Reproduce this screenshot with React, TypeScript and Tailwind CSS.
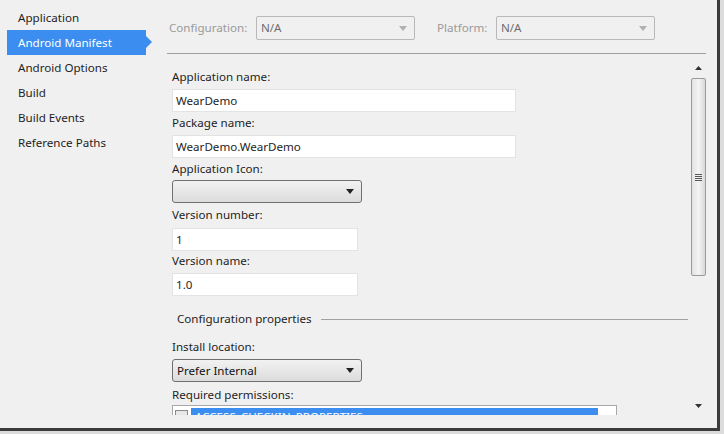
import React from "react";

const font = { fontFamily: '"Noto Sans", "Open Sans", Arial, sans-serif' };

function Caret({ color = "#222" }: { color?: string }) {
  return (
    <svg width="8" height="5" viewBox="0 0 8 5">
      <path d="M0 0 L8 0 L4 5 Z" fill={color} />
    </svg>
  );
}

function TextBox({ value, w }: { value: string; w: string }) {
  return (
    <div className={`${w} h-[23px] bg-white border border-[#e3e3e3] flex items-center px-[3px] text-[11.6px] text-[#1e1e1e]`}>
      {value}
    </div>
  );
}

function Combo({ value }: { value: string }) {
  return (
    <div className="w-[190px] h-[23px] rounded-[3px] border border-[#707070] bg-gradient-to-b from-[#f2f2f2] to-[#dcdcdc] flex items-center justify-between pl-[4px] pr-[7px] text-[11.6px] text-[#111]">
      <span>{value}</span>
      <Caret />
    </div>
  );
}

function Label({ children, mt }: { children: React.ReactNode; mt: string }) {
  return <div className={`${mt} text-[11.6px] text-[#1e1e1e] leading-[16px] h-[16px]`}>{children}</div>;
}

export default function App() {
  const nav = ["Application", "Android Manifest", "Android Options", "Build", "Build Events", "Reference Paths"];
  return (
    <div className="w-[724px] h-[434px] bg-[#dcdcdc] overflow-hidden" style={font}>
      <div className="w-[720px] h-[431px] border-r-[3px] border-b-[3px] border-[#3c3c3c] bg-[#f0f0f0] flex">
        {/* Sidebar */}
        <div className="w-[160px] shrink-0 pt-[5px] pl-[7px]">
          {nav.map((n, i) =>
            i === 1 ? (
              <div key={n} className="relative w-[139px] h-[25px] bg-[#3b8ef0] text-white text-[11.6px] flex items-center pl-[11px]">
                {n}
                <div className="absolute right-[-6px] top-[6px] w-0 h-0 border-t-[6px] border-b-[6px] border-l-[6px] border-t-transparent border-b-transparent border-l-[#3b8ef0]" />
              </div>
            ) : (
              <div key={n} className="h-[25px] text-[11.6px] text-[#1e1e1e] flex items-center pl-[11px]">
                {n}
              </div>
            )
          )}
        </div>
        {/* Main */}
        <div className="flex-1 flex flex-col min-w-0">
          <div className="h-[55px] shrink-0 flex flex-col pr-[11px]">
            <div className="flex items-center pt-[16px] pl-[9px] h-[40px]">
              <span className="text-[11.6px] text-[#9a9a9a] w-[87px]">Configuration:</span>
              <div className="w-[159px] h-[24px] border border-[#b9b9b9] rounded-[2px] flex items-center justify-between pl-[4px] pr-[7px] text-[11.6px] text-[#6d6d6d]">
                <span>N/A</span>
                <Caret color="#b0b0b0" />
              </div>
              <span className="text-[11.6px] text-[#9a9a9a] ml-[22px] w-[59px]">Platform:</span>
              <div className="w-[159px] h-[24px] border border-[#b9b9b9] rounded-[2px] flex items-center justify-between pl-[4px] pr-[7px] text-[11.6px] text-[#6d6d6d]">
                <span>N/A</span>
                <Caret color="#b0b0b0" />
              </div>
            </div>
            <div className="mt-[13px] ml-[7px] h-px bg-[#a0a0a0]" />
          </div>
          <div className="flex-1 flex min-h-0 mb-[13px]">
            <div className="flex-1 overflow-hidden pl-[12px] pt-[14px] min-w-0">
              <Label mt="mt-0">Application name:</Label>
              <div className="mt-[4px]"><TextBox value="WearDemo" w="w-[344px]" /></div>
              <Label mt="mt-[3px]">Package name:</Label>
              <div className="mt-[4px]"><TextBox value="WearDemo.WearDemo" w="w-[344px]" /></div>
              <Label mt="mt-[3px]">Application Icon:</Label>
              <div className="mt-[3px]"><Combo value="" /></div>
              <Label mt="mt-[4px]">Version number:</Label>
              <div className="mt-[5px]"><TextBox value="1" w="w-[186px]" /></div>
              <Label mt="mt-[2px]">Version name:</Label>
              <div className="mt-[4px]"><TextBox value="1.0" w="w-[186px]" /></div>
              <div className="mt-[15px] flex items-center pl-[5px] h-[16px]">
                <span className="text-[11.6px] text-[#1e1e1e] leading-[16px]">Configuration properties</span>
                <div className="flex-1 h-px bg-[#a0a0a0] ml-[9px] mr-[2px]" />
              </div>
              <Label mt="mt-[12px]">Install location:</Label>
              <div className="mt-[4px]"><Combo value="Prefer Internal" /></div>
              <Label mt="mt-[5px]">Required permissions:</Label>
              <div className="mt-[2px] w-[445px] h-[40px] bg-white border border-[#a8a8a8] pt-[2px] pl-[2px]">
                <div className="flex items-start">
                  <div className="w-[13px] h-[13px] border border-[#8a8a8a] bg-[#e8e8e8] mt-[2px]" />
                  <div className="ml-[3px] w-[407px] h-[18px] bg-[#3b8ef0] text-white text-[11.6px] leading-[18px] pl-[4px]">
                    ACCESS_CHECKIN_PROPERTIES
                  </div>
                </div>
              </div>
            </div>
            {/* Scrollbar */}
            <div className="w-[17px] shrink-0 mr-[10px] flex flex-col items-center pt-[11px] pb-[7px]">
              <svg width="7" height="4" viewBox="0 0 7 4"><path d="M0 4 L7 4 L3.5 0 Z" fill="#333" /></svg>
              <div className="mt-[8px] w-[15px] h-[198px] rounded-[2px] border border-[#9a9a9a] bg-gradient-to-r from-[#e2e2e2] via-[#f4f4f4] to-[#d8d8d8] flex flex-col items-center justify-center gap-[1px]">
                <div className="w-[7px] h-px bg-[#555]" />
                <div className="w-[7px] h-px bg-[#555]" />
                <div className="w-[7px] h-px bg-[#555]" />
                <div className="w-[7px] h-px bg-[#555]" />
              </div>
              <div className="flex-1" />
              <svg width="7" height="4" viewBox="0 0 7 4"><path d="M0 0 L7 0 L3.5 4 Z" fill="#333" /></svg>
            </div>
          </div>
        </div>
      </div>
    </div>
  );
}
